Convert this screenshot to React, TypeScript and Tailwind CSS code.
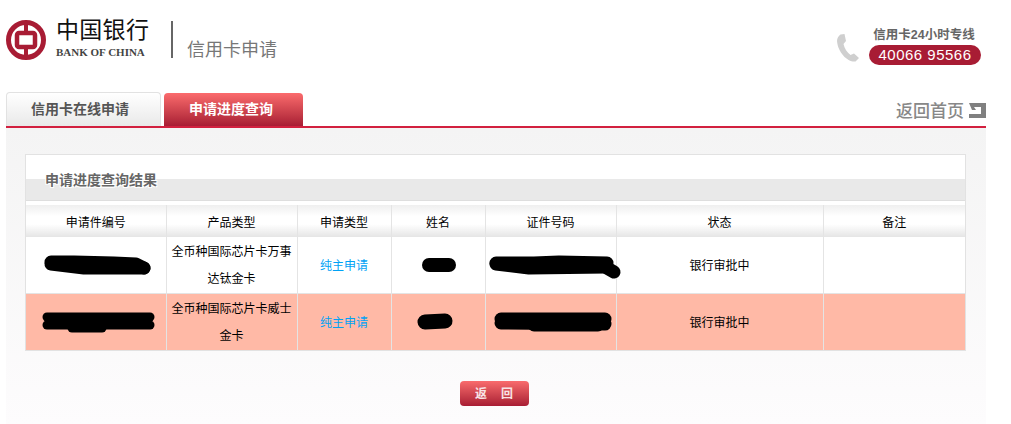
const cols = ['申请件编号', '产品类型', '申请类型', '姓名', '证件号码', '状态', '备注'];

const rows = [
  {
    product: ['全币种国际芯片卡万事', '达钛金卡'],
    bg: 'bg-white',
    marks: [
      { cls: 'ml-[18px]', w: 107, h: 20, d: ['M7 6 L30 6 L70 7 L92 8 L100 12', 'M7 8 L40 12 L70 12 L100 12'], sw: 13 },
      { cls: 'ml-[30px]', w: 34, h: 14, d: ['M7 6 L27 6'], sw: 14 },
      { cls: 'ml-[3px]', w: 129, h: 19, d: ['M7 6 L45 6 L70 5 L118 6', 'M7 7 L40 11 L118 10', 'M118 11 L125 15'], sw: 13 },
    ],
  },
  {
    product: ['全币种国际芯片卡威士', '金卡'],
    bg: 'bg-[#ffb9a6]',
    marks: [
      { cls: 'ml-[16px]', w: 113, h: 21, d: ['M5 4 L108 4', 'M5 12 L108 12', 'M30 15 L60 15'], sw: 9 },
      { cls: 'ml-[25px]', w: 36, h: 16, d: ['M8 7 L28 6'], sw: 15 },
      { cls: 'ml-[8px]', w: 118, h: 20, d: ['M7 6 L111 6', 'M7 10 L111 11', 'M40 12 L104 12'], sw: 13 },
    ],
  },
];

function Scribble({ cls, w, h, d, sw }: { cls: string; w: number; h: number; d: string[]; sw: number }) {
  return (
    <svg width={w} height={h} viewBox={`0 0 ${w} ${h}`} className={`block overflow-visible ${cls}`}>
      {d.map((p) => (
        <path key={p} d={p} fill="none" stroke="#000" strokeWidth={sw} strokeLinecap="round" strokeLinejoin="round" />
      ))}
    </svg>
  );
}

export default function App() {
  return (
    <div className="h-[424px] w-[1011px] overflow-hidden bg-white font-['Liberation_Sans','Noto_Sans_CJK_SC',sans-serif]">
      <div className="ml-[6px] w-[980px]">
        {/* header */}
        <div className="flex h-[92px]">
          <svg width="40" height="40" viewBox="0 0 40 40" className="mt-[20px] shrink-0">
            <circle cx="20" cy="20" r="17.5" fill="none" stroke="#a81c34" strokeWidth="5" />
            <rect x="11" y="13" width="18" height="14" rx="2" fill="none" stroke="#a81c34" strokeWidth="4.5" />
            <rect x="18" y="3" width="4" height="9" fill="#a81c34" />
            <rect x="18" y="28" width="4" height="9" fill="#a81c34" />
          </svg>
          <div className="ml-[10px] mt-[16px] w-[100px]">
            <div className="text-[23px] leading-[28px] tracking-[0.3px] whitespace-nowrap text-[#111]">中国银行</div>
            <div className="font-['Liberation_Serif',serif] mt-[2px] text-[11px] leading-[13px] font-bold whitespace-nowrap text-[#444]">BANK OF CHINA</div>
          </div>
          <div className="ml-[15px] mt-[21px] h-[37px] w-[2px] bg-[#666]" />
          <div className="ml-[14px] mt-[38px] text-[18px] leading-[24px] text-[#777]">信用卡申请</div>
          <svg width="24" height="30" viewBox="0 0 24 30" className="ml-auto mr-[3px] mt-[33px]">
            <path d="M4.5 1.5 L8.5 1 L10 8 L7.5 11 C8.5 15.5 11 19.5 14.5 22 L18 20.5 L23 25 L19.5 28.5 C12 29.5 2 20 1 8 C1 5 2.5 3 4.5 1.5 Z" fill="#cfcfcf" />
          </svg>
          <div className="mr-[5px] mt-[27px] w-[112px] ml-[6px]">
            <div className="pr-[2px] text-center text-[12.5px] leading-[17px] font-bold text-[#666] whitespace-nowrap">信用卡24小时专线</div>
            <div className="mt-[1px] h-[20px] rounded-[10px] bg-[#a81c34] text-center text-[15px] leading-[20px] tracking-[0.5px] text-white whitespace-nowrap">40066 95566</div>
          </div>
        </div>

        {/* tabs */}
        <div className="flex h-[34px] items-end">
          <div className="flex h-[34px] w-[155px] items-center rounded-t-[4px] border border-b-0 border-[#e2e2e2] bg-gradient-to-b from-white to-[#e9e9e9] pl-[24px] text-[14px] font-bold text-[#555]">
            信用卡在线申请
          </div>
          <div className="ml-[3px] flex h-[33px] w-[139px] items-center rounded-t-[4px] bg-gradient-to-b from-[#fb6b6d] to-[#a81c34] pl-[25px] text-[14px] font-bold text-white">
            申请进度查询
          </div>
          <div className="ml-auto flex h-[34px] items-center">
            <span className="mt-[5px] text-[17px] font-medium text-[#888]">返回首页</span>
            <svg width="17" height="15" viewBox="0 0 17 15" className="ml-[5px] mt-[2px]">
              <path d="M0 0 H17 V15 H0 V11 H12 V4 H5 L7 7 L3 7 Z" fill="#808080" />
            </svg>
          </div>
        </div>
        <div className="h-[2px] bg-[#d2203f]" />

        {/* panel */}
        <div className="h-[296px] bg-gradient-to-b from-[#f4f4f4] to-[#fdfcfd] px-[19px] pt-[26px]">
          <div className="h-[197px] w-[941px] border border-[#e2e2e2] bg-white">
            <div className="mb-[4px] border-b border-[#dedede] bg-[linear-gradient(to_bottom,#fff_24px,#e9e9e9_24px)] pl-[19px]">
              <div className="h-[45px] pt-[15px] text-[14px] leading-[20px] font-bold text-[#666] [text-shadow:1px_1px_0_#fff,-1px_-1px_0_#fff,1px_-1px_0_#fff,-1px_1px_0_#fff]">
                申请进度查询结果
              </div>
            </div>
            <table className="w-full table-fixed border-collapse text-center text-[12px] text-black">
              <colgroup>
                <col className="w-[140px]" />
                <col className="w-[131px]" />
                <col className="w-[94px]" />
                <col className="w-[94px]" />
                <col className="w-[131px]" />
                <col className="w-[207px]" />
                <col />
              </colgroup>
              <thead>
                <tr className="h-[32px] bg-[linear-gradient(to_bottom,#efefef,#fff_35%,#fff_60%,#e5e5e5)]">
                  {cols.map((c, i) => (
                    <th key={c} className={`pt-[3px] font-normal ${i < 6 ? 'border-r border-[#e4e4e4]' : ''}`}>{c}</th>
                  ))}
                </tr>
              </thead>
              <tbody>
                {rows.map((r) => (
                  <tr key={r.product[0]} className={`h-[56px] border-b border-[#e4e4e4] last:border-b-0 ${r.bg} [&>td]:pt-[2px]`}>
                    <td className="border-r border-[#e4e4e4]"><Scribble {...r.marks[0]} /></td>
                    <td className="border-r border-[#e4e4e4] leading-[27px]">
                      {r.product.map((t) => <div key={t}>{t}</div>)}
                    </td>
                    <td className="border-r border-[#e4e4e4] text-[#00a2f5]">纯主申请</td>
                    <td className="border-r border-[#e4e4e4]"><Scribble {...r.marks[1]} /></td>
                    <td className="border-r border-[#e4e4e4]"><Scribble {...r.marks[2]} /></td>
                    <td className="border-r border-[#e4e4e4]">银行审批中</td>
                    <td />
                  </tr>
                ))}
              </tbody>
            </table>
          </div>
          <div className="mt-[30px] flex justify-center">
            <button className="mr-[3px] h-[25px] w-[69px] rounded-[4px] bg-gradient-to-b from-[#f96b6d] to-[#a81c34] text-[12px] font-bold tracking-[1px] text-[#f8e4e6] whitespace-pre">
              返　回
            </button>
          </div>
        </div>
      </div>
    </div>
  );
}
